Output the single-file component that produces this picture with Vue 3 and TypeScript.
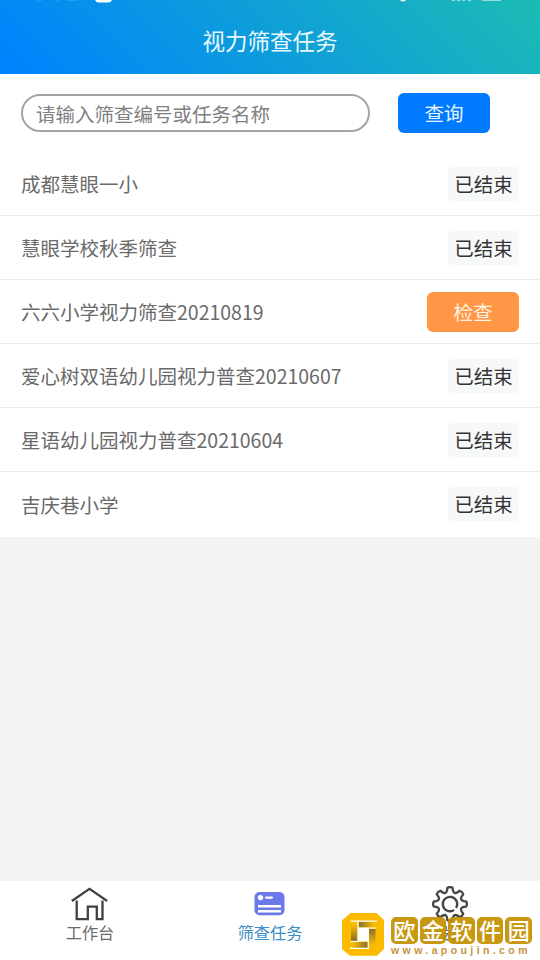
<script setup lang="ts">
interface Task {
  name: string
  open: boolean
}

const tasks: Task[] = [
  { name: '成都慧眼一小', open: false },
  { name: '慧眼学校秋季筛查', open: false },
  { name: '六六小学视力筛查20210819', open: true },
  { name: '爱心树双语幼儿园视力普查20210607', open: false },
  { name: '星语幼儿园视力普查20210604', open: false },
  { name: '吉庆巷小学', open: false },
]

const stamp: string[] = ['欧', '金', '软', '件', '园']

// Outline of an eight-toothed gear centred on the origin, with soft valleys between the teeth.
function gearPath(): string {
  const at = (deg: number, radius: number): string => {
    const a = (deg * Math.PI) / 180
    return `${(radius * Math.sin(a)).toFixed(2)} ${(-radius * Math.cos(a)).toFixed(2)}`
  }
  let d = `M${at(-9, 16.4)}`
  for (let tooth = 0; tooth < 8; tooth++) {
    const t = tooth * 45
    d += `Q${at(t, 17.6)} ${at(t + 9, 16.4)}`
    d += `L${at(t + 12, 14)}`
    d += `Q${at(t + 22.5, 10.4)} ${at(t + 33, 14)}`
    d += `L${at(t + 36, 16.4)}`
  }
  return `${d}Z`
}
</script>

<template>
  <div class="screen">
    <header class="header">
      <svg class="status" width="540" height="4" viewBox="0 0 540 4">
        <path d="M37 0h5M55 0h4M67 0h10" stroke="#fff" stroke-opacity=".25" />
        <path d="M95 0h17q-1 2.5-4 2.5h-9Q96 2.500 95 0Z" fill="#fff" />
        <path d="M398 0h8q-3 3-6 0Z" fill="#fff" />
        <path d="M452 .5h3M457 .5h3M462 .5h3M468 .5h3M482 .5h19" stroke="#fff" stroke-opacity=".55" />
      </svg>
      <h1 class="title">视力筛查任务</h1>
    </header>

    <section class="search">
      <input class="field" type="text" placeholder="请输入筛查编号或任务名称" />
      <button class="btn query">查询</button>
    </section>

    <ul class="list">
      <li v-for="task in tasks" :key="task.name" class="row">
        <span class="name">{{ task.name }}</span>
        <button v-if="task.open" class="btn check">检查</button>
        <span v-else class="ended">已结束</span>
      </li>
    </ul>

    <nav class="tabs">
      <a class="tab">
        <svg class="icon" width="40" height="36" viewBox="0 0 40 36" fill="none" stroke="#414141" stroke-width="2.3">
          <path d="M1.800 15 19.500 2.800 37.200 15" />
          <path d="M6.700 14.500V33.200H17.800V20.700H26.800V33.200H32.500V14.500" />
        </svg>
        <span>工作台</span>
      </a>
      <a class="tab active">
        <svg class="icon" width="40" height="36" viewBox="0 0 40 36">
          <rect x="4.500" y="6" width="30" height="23.200" rx="5" fill="#6b7ae8" />
          <circle cx="10.500" cy="11.600" r="2.700" fill="#fff" />
          <path d="M16 11.600H22" stroke="#fff" stroke-width="2.200" stroke-linecap="round" />
          <path d="M8 20.300H31M8 25.200H31" stroke="#fff" stroke-width="2.400" />
        </svg>
        <span>筛查任务</span>
      </a>
      <a class="tab">
        <svg class="icon" width="40" height="36" viewBox="-20 -18 40 36" fill="none" stroke="#454545" stroke-width="2.3" stroke-linejoin="round" stroke-linecap="round">
          <path :d="gearPath()" />
          <path d="M3.300 6.400A7.200 7.200 0 1 1 6.500 3.100" />
        </svg>
        <span>设置</span>
      </a>
    </nav>

    <div class="watermark">
      <svg class="mark" width="44" height="45" viewBox="0 0 44 45">
        <defs>
          <linearGradient id="fadeRight"><stop offset="0" stop-color="#86702f" /><stop offset=".85" stop-color="#fdbb00" /></linearGradient>
          <linearGradient id="fadeLeft"><stop offset=".15" stop-color="#fdbb00" /><stop offset="1" stop-color="#86702f" /></linearGradient>
          <linearGradient id="fadeDown" x2="0" y2="1"><stop offset=".15" stop-color="#fdbb00" /><stop offset="1" stop-color="#86702f" /></linearGradient>
          <linearGradient id="fadeUp" x2="0" y2="1"><stop offset="0" stop-color="#86702f" /><stop offset=".85" stop-color="#fdbb00" /></linearGradient>
        </defs>
        <path fill="#fdbb00" d="M9.500 1H35.500L43 8V37L36 43.700H9L1 37V8.500Z" />
        <path fill="#fff" d="M17 16H27.500V29.500H17Z" />
        <path fill="url(#fadeRight)" d="M18 9.600H35.500V15.400H18Z" />
        <path fill="url(#fadeUp)" d="M28 17H34.500V36H28Z" />
        <path fill="url(#fadeLeft)" d="M9 30H26.700V36H9Z" />
        <path fill="url(#fadeDown)" d="M10 9.600H16.400V28.800H10Z" />
        <path fill="none" stroke="#fff" stroke-width="1.200" d="M9.600 9.200H36M17 29.500V9.200M9.600 29.500H17.500M17 16H35M27.300 16V36.300H8.500" />
      </svg>
      <div class="brand">
        <div class="stamps">
          <span v-for="char in stamp" :key="char" class="stamp">{{ char }}</span>
        </div>
        <span class="site">www.apoujin.com</span>
      </div>
    </div>
  </div>
</template>

<style>
body {
  margin: 0;
}
</style>

<style scoped>
.screen {
  position: relative;
  display: flex;
  flex-direction: column;
  width: 540px;
  height: 960px;
  overflow: hidden;
  background: #f3f3f3;
  font-family: "Noto Sans CJK SC", sans-serif;
  font-size: 19.5px;
  color: #6a6a6a;
}
.header {
  display: flex;
  flex-direction: column;
  align-items: center;
  height: 74px;
  flex: none;
  background: linear-gradient(45deg, #0081ff, #1cbbb4);
}
.status {
  display: block;
}
.title {
  margin: 19px 0 0;
  font-size: 22.5px;
  line-height: 34px;
  font-weight: 400;
  color: #e9f8ff;
}
.search {
  display: flex;
  align-items: center;
  justify-content: space-between;
  box-sizing: border-box;
  height: 78px;
  flex: none;
  padding: 0 50px 0 21px;
  background: #fff;
}
.field {
  box-sizing: border-box;
  width: 349px;
  height: 38px;
  padding: 0 13px;
  border: 2px solid #a4a4a4;
  border-radius: 19px;
  outline: none;
  background: #fff;
  font: inherit;
  color: #666;
}
.field::placeholder {
  color: #808080;
  opacity: 1;
}
.btn {
  width: 92px;
  height: 40px;
  padding: 0;
  border: 0;
  border-radius: 6px;
  font: inherit;
  line-height: 40px;
  color: #e9f6ff;
}
.query {
  background: #007aff;
}
.check {
  background: #ff9747;
  color: #fff3e2;
}
.list {
  flex: none;
  margin: 0;
  padding: 0;
  list-style: none;
  background: #fff;
}
.row {
  display: flex;
  align-items: center;
  justify-content: space-between;
  box-sizing: border-box;
  height: 64.1px;
  padding: 0 21px;
  border-bottom: 1px solid #ececec;
}
.row:last-child {
  border-bottom-color: #fff;
}
.ended {
  box-sizing: border-box;
  width: 71px;
  height: 34px;
  line-height: 34px;
  border-radius: 3px;
  background: #f7f8f9;
  color: #333;
  text-align: center;
}
.tabs {
  display: flex;
  box-sizing: border-box;
  height: 79px;
  flex: none;
  margin-top: auto;
  padding-top: 5px;
  background: #fff;
}
.tab {
  display: flex;
  flex: 1;
  flex-direction: column;
  align-items: center;
  font-size: 16.2px;
  line-height: 20px;
}
.tab.active {
  color: #3c8dc5;
}
.icon {
  display: block;
}
.watermark {
  position: absolute;
  left: 341px;
  top: 912px;
  display: flex;
  gap: 6px;
}
.brand {
  display: flex;
  flex-direction: column;
  padding-top: 5px;
}
.stamps {
  display: flex;
  gap: 2px;
}
.stamp {
  width: 26.600px;
  height: 26.500px;
  border-radius: 5px;
  background: rgba(196, 144, 0, 0.93);
  color: #fff;
  font-size: 22px;
  font-weight: 500;
  line-height: 25px;
  text-align: center;
}
.site {
  font-family: "Liberation Sans", Arial, sans-serif;
  font-size: 10.500px;
  font-weight: 700;
  line-height: 12px;
  letter-spacing: 3.400px;
  color: #c9923a;
}
</style>
